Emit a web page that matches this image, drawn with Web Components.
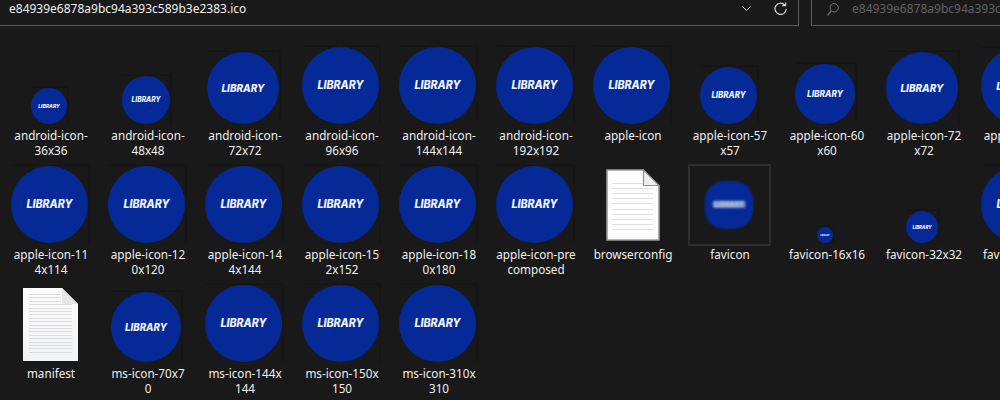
<!DOCTYPE html>
<html>
<head>
<meta charset="utf-8">
<style>
html, body { margin: 0; height: 100%; background: #191919; overflow: hidden; }
body { font: 12px "Noto Sans", "Liberation Sans", sans-serif; color: #f0f0f0; }
</style>
</head>
<body>
<explorer-window>
  <path-bar slot="bar" path="e84939e6878a9bc94a393c589b3e2383.ico"></path-bar>
  <file-tile size="36">android-icon-<br>36x36</file-tile>
  <file-tile size="48">android-icon-<br>48x48</file-tile>
  <file-tile size="72">android-icon-<br>72x72</file-tile>
  <file-tile size="77">android-icon-<br>96x96</file-tile>
  <file-tile size="77">android-icon-<br>144x144</file-tile>
  <file-tile size="77">android-icon-<br>192x192</file-tile>
  <file-tile size="77">apple-icon</file-tile>
  <file-tile size="57">apple-icon-57<br>x57</file-tile>
  <file-tile size="60">apple-icon-60<br>x60</file-tile>
  <file-tile size="72">apple-icon-72<br>x72</file-tile>
  <file-tile size="76">apple-icon-76<br>x76</file-tile>

  <file-tile size="77">apple-icon-11<br>4x114</file-tile>
  <file-tile size="77">apple-icon-12<br>0x120</file-tile>
  <file-tile size="77">apple-icon-14<br>4x144</file-tile>
  <file-tile size="77">apple-icon-15<br>2x152</file-tile>
  <file-tile size="77">apple-icon-18<br>0x180</file-tile>
  <file-tile size="77">apple-icon-pre<br>composed</file-tile>
  <file-tile kind="doc">browserconfig</file-tile>
  <file-tile kind="blur" size="48">favicon</file-tile>
  <file-tile size="16">favicon-16x16</file-tile>
  <file-tile size="32">favicon-32x32</file-tile>
  <file-tile size="77">favicon-96x96</file-tile>

  <file-tile kind="dense">manifest</file-tile>
  <file-tile size="70">ms-icon-70x7<br>0</file-tile>
  <file-tile size="77">ms-icon-144x<br>144</file-tile>
  <file-tile size="77">ms-icon-150x<br>150</file-tile>
  <file-tile size="77">ms-icon-310x<br>310</file-tile>
</explorer-window>

<script>
class ExplorerWindow extends HTMLElement {
  constructor() {
    super();
    this.attachShadow({ mode: 'open' }).innerHTML = `
      <style>
        :host { display: block; width: 1000px; height: 400px; overflow: hidden; }
        .grid {
          display: grid;
          grid-template-columns: repeat(11, 97px);
          grid-auto-rows: 119px;
          padding: 16px 0 0 1px;
          width: 1100px;
        }
      </style>
      <slot name="bar"></slot>
      <div class="grid"><slot></slot></div>`;
  }
}
customElements.define('explorer-window', ExplorerWindow);

class PathBar extends HTMLElement {
  constructor() {
    super();
    const path = this.getAttribute('path');
    this.attachShadow({ mode: 'open' }).innerHTML = `
      <style>
        :host { display: flex; gap: 12px; height: 26px; line-height: 18px; }
        .box { box-sizing: border-box; height: 26px; border-bottom: 1px solid #5c5c5c; display: flex; align-items: flex-start; }
        .addr { width: 799px; padding-left: 9px; border-right: 1px solid #5c5c5c; color: #f0f0f0; }
        .addr span { flex: 1; }
        .find { flex: 1; min-width: 0; overflow: hidden; border-left: 1px solid #5c5c5c; color: #626262; white-space: nowrap; }
        svg { flex: none; fill: none; }
        .chev { margin: 6px 23px 0 0; }
        .ref { margin: 2px 11px 0 0; }
        .mag { margin: 3px 13px 0 15px; }
      </style>
      <div class="box addr">
        <span>${path}</span>
        <svg class="chev" width="9" height="5" viewBox="0 0 9 5"><path d="M.5.5 4.5 4.5 8.5.5" stroke="#d8d8d8"/></svg>
        <svg class="ref" width="13" height="13" viewBox="0 0 13 13"><path d="M10.7 3A5.6 5.6 0 1 0 12.2 7M11.6.4V3.6H8.2" stroke="#d8d8d8" stroke-width="1.2"/></svg>
      </div>
      <div class="box find">
        <svg class="mag" width="12" height="13" viewBox="0 0 12 13"><circle cx="7.2" cy="4.8" r="4.2" stroke="#777"/><path d="M4.2 8 .6 12.4" stroke="#777" stroke-width="1.3"/></svg>
        <span>${path}</span>
      </div>`;
  }
}
customElements.define('path-bar', PathBar);

class FileTile extends HTMLElement {
  constructor() {
    super();
    const kind = this.getAttribute('kind') || 'icon';
    const size = +this.getAttribute('size') || 0;
    let art = FileTile.logo(size, kind === 'blur');
    if (kind === 'doc') art = FileTile.doc();
    if (kind === 'dense') art = FileTile.denseDoc();
    this.attachShadow({ mode: 'open' }).innerHTML = `
      <style>
        :host { display: block; position: relative; text-align: center; line-height: 15px; font-size: 11.7px; color: #f0f0f0; }
        .thumb { height: 82px; width: 96px; display: flex; align-items: flex-end; justify-content: center; }
        .thumb.mid { box-sizing: border-box; height: 82px; padding: 6px 0 0 2px; align-items: center; }
        .thumb.doc { padding-left: 3px; }
        .label { margin: 4px 0 0 2px; width: 96px; white-space: nowrap; }
        .frame { position: absolute; left: 8px; top: 3px; width: 79px; height: 78px; border: 2px solid #2e2e2e; border-radius: 1px; }
        svg { display: block; }
        .shadow { box-shadow: 1px 0 1px #161616, 1px -1px 1px #161616; }
        .soft { filter: blur(.9px); }
      </style>
      ${kind === 'blur' ? '<div class="frame"></div>' : ''}
      <div class="thumb ${kind === 'icon' ? '' : 'mid'} ${kind === 'doc' || kind === 'dense' ? 'doc' : ''}">${art}</div>
      <div class="label"><slot></slot></div>`;
  }

  static logo(size, blur) {
    // the blurred favicon is a low res square-ish circle
    const shape = blur
      ? '<rect width="100" height="100" rx="40" fill="#052a98"/><rect x="16" y="41" width="68" height="15" rx="4" fill="#7f92cc"/>'
      : '<circle cx="50" cy="50" r="50" fill="#052a98"/>';
    return `<svg class="${blur ? 'soft' : 'shadow'}" width="${size}" height="${size}" viewBox="0 0 100 100">${shape}
      <text x="50" y="55" text-anchor="middle" textLength="60" lengthAdjust="spacingAndGlyphs"
        font-family="Inter, Roboto, sans-serif" font-weight="800" font-style="italic" font-size="14.5" fill="#eef1fa" fill-opacity="${blur ? .45 : 1}">LIBRARY</text></svg>`;
  }

  static doc() {
    let lines = '';
    for (let y = 13.5; y < 62; y += 5.2) lines += `<path d="M6 ${Math.round(y) + .5}H47" stroke="#e0e0e0"/>`;
    return `<svg width="54" height="72" viewBox="0 0 54 72">
      <path d="M1 1H37L53 17V71H1Z" fill="#fdfdfd" stroke="#9a9a9a" stroke-width="1.6"/>${lines}
      <path d="M37.5 1V16.5H53Z" fill="#efefef" stroke="#8f8f8f" stroke-width="1.2"/></svg>`;
  }

  static denseDoc() {
    let lines = '';
    for (let y = 6; y < 64; y += 3.4) lines += `<path d="M6 ${Math.round(y) + .5}H${y < 16 ? 38 : 49}" stroke="#dcdcdc"/>`;
    return `<svg width="55" height="73" viewBox="0 0 55 73">
      <defs><linearGradient id="pg" x1="0" y1="0" x2="0" y2="1"><stop offset="0" stop-color="#fcfcfc"/><stop offset="1" stop-color="#f2f3f5"/></linearGradient></defs>
      <path d="M0 0H39L55 16V73H0Z" fill="url(#pg)"/>${lines}
      <path d="M39 0V14Q39 16 41 16H55Z" fill="#e6e6e6"/></svg>`;
  }
}
customElements.define('file-tile', FileTile);
</script>
</body>
</html>
